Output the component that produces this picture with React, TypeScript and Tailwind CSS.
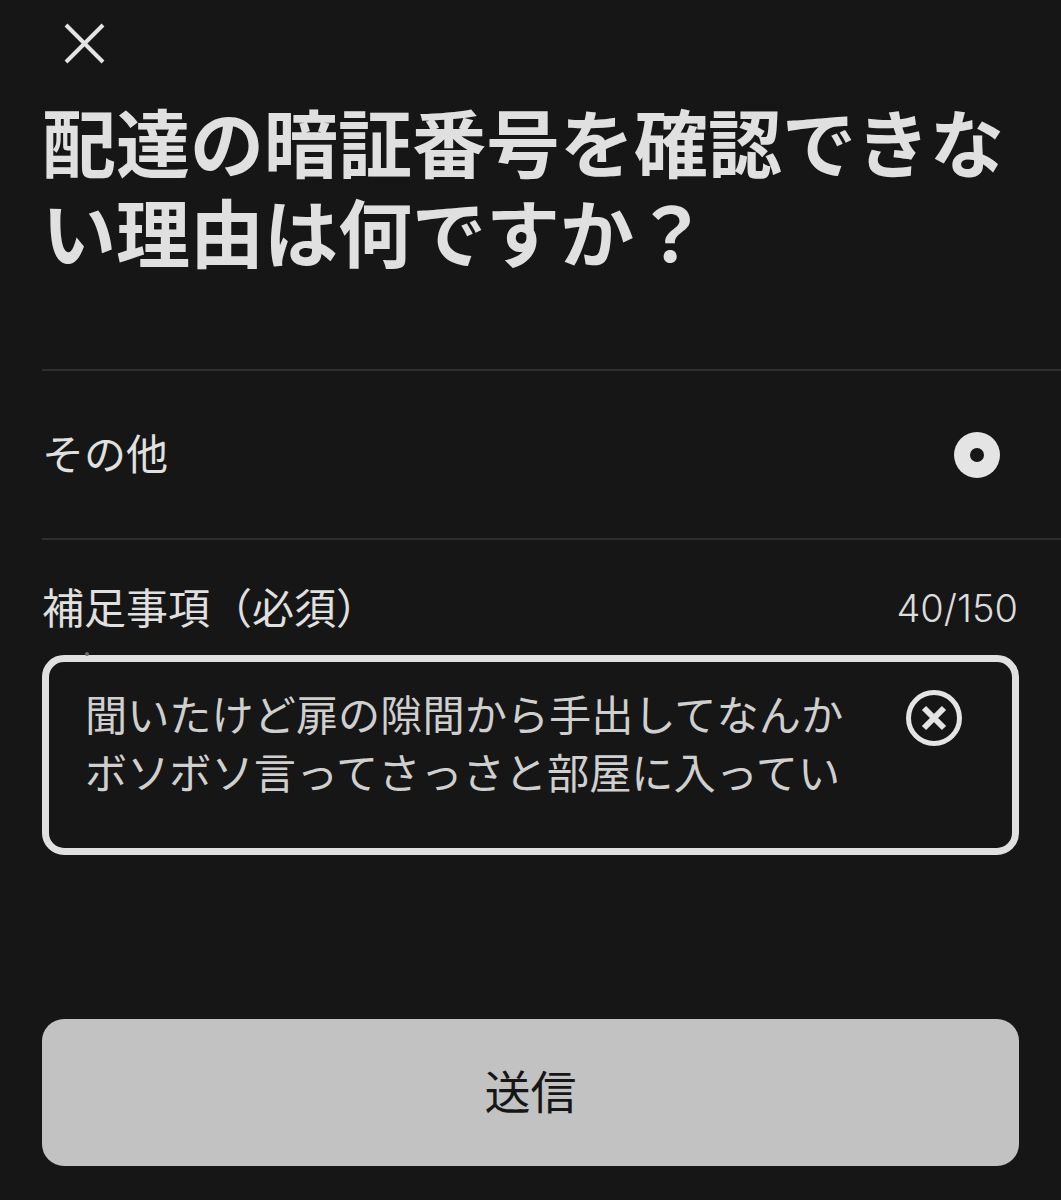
const font = "font-['Inter','Noto_Sans_CJK_JP',sans-serif]"

export default function App() {
  return (
    <div className={`${font} w-[1061px] h-[1200px] overflow-hidden bg-[#161616] flex flex-col`}>
      <div className="h-[100px] pl-[62px] pt-[21px] shrink-0">
        <svg width="45" height="45" viewBox="0 0 45 45" fill="none" stroke="#e4e4e4" strokeWidth="4">
          <path d="M4 4L41 41M41 4L4 41" />
        </svg>
      </div>
      <h1 className="ml-[42px] mr-[40px] text-[74px] leading-[90px] font-bold text-[#e0e0e0] h-[269px] shrink-0">
        配達の暗証番号を確認できない理由は何ですか？
      </h1>
      <div className="ml-[42px] border-t-2 border-b-2 border-[#2e2e2e] h-[171px] pr-[61px] flex items-center justify-between shrink-0">
        <span className="text-[42px] text-[#e0e0e0]">その他</span>
        <div className="w-[46px] h-[46px] rounded-full bg-[#e4e4e4] flex items-center justify-center">
          <div className="w-[14px] h-[14px] rounded-full bg-[#161616]" />
        </div>
      </div>
      <div className="mx-[42px] mt-[40px] flex items-center justify-between h-[56px] shrink-0">
        <span className="text-[42px] text-[#e0e0e0]">補足事項（必須）</span>
        <span className="text-[38px] font-light text-[#dcdcdc] mr-[1px]">40/150</span>
      </div>
      <div className="relative mx-[42px] mt-[19px] h-[200px] rounded-[22px] border-[7px] border-[#e0e0e0] pl-[36px] pr-[49px] pt-[25px] flex justify-between shrink-0">
        <div className="absolute left-[36px] -top-[10px] w-[4px] h-[4px] rounded-full bg-[#6a6a6a]" />
        <p className="w-[770px] text-[42.2px] leading-[58px] text-[#cfcfcf]">
          聞いたけど扉の隙間から手出してなんかボソボソ言ってさっさと部屋に入ってい
        </p>
        <svg className="mt-[2px]" width="58" height="58" viewBox="0 0 58 58" fill="none" stroke="#e4e4e4" strokeWidth="5">
          <circle cx="29" cy="29" r="25.5" />
          <path d="M19 19L39 39M39 19L19 39" strokeWidth="6" />
        </svg>
      </div>
      <div className="mx-[42px] mt-[164px] h-[147px] rounded-[22px] bg-[#c2c2c2] flex items-center justify-center shrink-0">
        <span className="text-[46px] text-[#161616]">送信</span>
      </div>
    </div>
  )
}
